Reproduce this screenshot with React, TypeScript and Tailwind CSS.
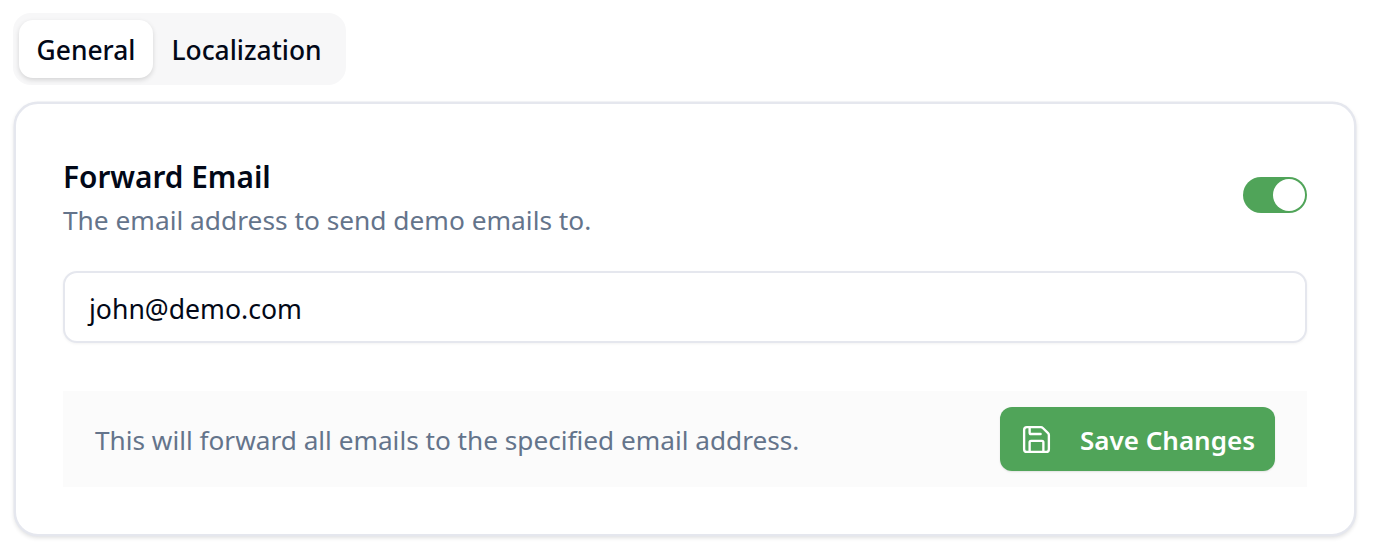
import { Save } from "lucide-react";

export default function App() {
  return (
    <div className="min-h-[554px] bg-white px-[14px] pt-[13px] font-['Noto_Sans',sans-serif] text-[#020817]">
      <div className="flex h-[72px] w-[333px] -ml-px items-center gap-0 rounded-[18px] bg-[#f7f7f8] px-[6px]">
        <div className="flex h-[58px] w-[134px] items-center justify-center rounded-[14px] bg-white pt-[4px] text-[26.4px] font-medium shadow-[0_2px_5px_rgba(0,0,0,0.14)]">
          General
        </div>
        <div className="flex h-[58px] w-[187px] items-center justify-center pt-[4px] text-[26.4px] font-medium">
          Localization
        </div>
      </div>
      <div className="mt-[17px] h-[434px] w-[1342px] rounded-[24px] border-2 border-[#e5e7ee] bg-white px-[47px] pt-[47px] shadow-[0_0_0_0.5px_#e5e7ee,0_2px_4px_rgba(0,0,0,0.12)]">
        <div className="flex h-[88px] items-center justify-between">
          <div className="-mt-[1px]">
            <div className="text-[29.8px] leading-[50px] font-semibold">Forward Email</div>
            <div className="text-[26.3px] leading-[36px] text-[#64748b]">The email address to send demo emails to.</div>
          </div>
          <div className="flex h-[36px] w-[64px] items-center justify-end rounded-full bg-[#50a459] pr-[2px]">
            <div className="h-[32px] w-[32px] rounded-full bg-white" />
          </div>
        </div>
        <div className="mt-[32px] flex h-[72px] items-center rounded-[14px] border-2 border-[#e5e7ee] bg-white pt-[6px] pl-[24px] text-[26.6px] shadow-[0_1px_3px_rgba(0,0,0,0.05)]">
          john@demo.com
        </div>
        <div className="mt-[48px] flex h-[96px] items-center justify-between bg-[#fbfbfb] px-[32px]">
          <div className="pt-[4px] text-[26.2px] text-[#64748b]">This will forward all emails to the specified email address.</div>
          <div className="flex h-[64px] w-[275px] items-center rounded-[12px] bg-[#50a459] pl-[19.5px] text-white shadow-[0_1px_2px_rgba(0,0,0,0.1)]">
            <Save size={33} strokeWidth={1.7} />
            <span className="ml-[27.5px] pt-[2px] text-[26px] font-semibold">Save Changes</span>
          </div>
        </div>
      </div>
    </div>
  );
}
